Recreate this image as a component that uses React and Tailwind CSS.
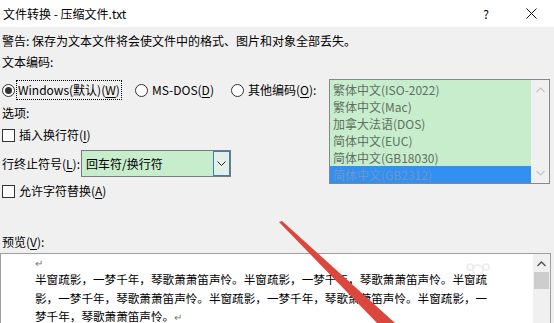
import React from "react";

const U = ({ children }) => <span className="underline underline-offset-2">{children}</span>;

function Radio({ checked }) {
  return (
    <span className="relative inline-flex h-[13px] w-[13px] shrink-0 items-center justify-center rounded-full border border-[#333] bg-white">
      {checked && <span className="h-[7px] w-[7px] rounded-full bg-[#333]" />}
    </span>
  );
}

function Check() {
  return <span className="inline-block h-[13px] w-[13px] shrink-0 border border-[#333] bg-white" />;
}

const listItems = [
  "繁体中文(ISO-2022)",
  "繁体中文(Mac)",
  "加拿大法语(DOS)",
  "简体中文(EUC)",
  "简体中文(GB18030)",
];

export default function App() {
  return (
    <div className="relative h-[323px] w-[554px] overflow-hidden bg-[#f0f0f0] font-['Noto_Sans_CJK_SC',sans-serif] text-[12px] text-black">
      {/* Title bar */}
      <div className="flex h-[27px] items-center bg-white pl-[3px]">
        <span className="text-[12px]">文件转换 - 压缩文件.txt</span>
        <span className="ml-auto mr-[37px] text-[12px]">?</span>
        <svg className="mr-[17px]" width="11" height="11" viewBox="0 0 11 11">
          <path d="M0.5 0.5 L10.5 10.5 M10.5 0.5 L0.5 10.5" stroke="#111" strokeWidth="1" />
        </svg>
      </div>

      <div className="mt-[5px] flex h-[18px] items-center pl-[2px]">警告: 保存为文本文件将会使文件中的格式、图片和对象全部丢失。</div>
      <div className="mt-[3px] flex h-[18px] items-center pl-[2px]">文本编码:</div>

      <div className="mt-[8px] flex">
        <div className="flex w-[329px] flex-col">
          <div className="flex h-[22px] items-center">
            <div className="ml-[2px] flex w-[133px] items-center">
              <Radio checked />
              <span className="ml-[1px] flex h-[20px] items-center border border-dotted border-black px-[1px]">
                Windows(默认)(<U>W</U>)
              </span>
            </div>
            <div className="flex w-[96px] items-center">
              <Radio />
              <span className="ml-[4px]">MS-DOS(<U>D</U>)</span>
            </div>
            <div className="flex items-center">
              <Radio />
              <span className="ml-[4px]">其他编码(<U>O</U>):</span>
            </div>
          </div>
          <div className="mt-[3px] flex h-[18px] items-center pl-[2px]">选项:</div>
          <div className="mt-[4px] flex h-[18px] items-center pl-[2px]">
            <Check />
            <span className="ml-[4px]">插入换行符(<U>I</U>)</span>
          </div>
          <div className="mt-[6px] flex h-[27px] items-center pl-[2px]">
            <span className="w-[79px]">行终止符号(<U>L</U>):</span>
            <div className="flex h-[27px] w-[150px] items-stretch border border-[#7a7a7a] bg-[#c7edcc]">
              <span className="flex flex-1 items-center pl-[4px]">回车符/换行符</span>
              <span className="flex w-[17px] items-center justify-center border border-[#3c7fb1] bg-[#e3efe9]">
                <svg width="9" height="6" viewBox="0 0 9 6">
                  <path d="M0.5 0.5 L4.5 4.5 L8.5 0.5" fill="none" stroke="#222" strokeWidth="1" />
                </svg>
              </span>
            </div>
          </div>
          <div className="mt-[5px] flex h-[18px] items-center pl-[2px]">
            <Check />
            <span className="ml-[4px]">允许字符替换(<U>A</U>)</span>
          </div>
        </div>

        <div className="flex h-[105px] w-[221px] border border-[#828790] bg-[#f0f0f0]">
          <div className="flex flex-1 flex-col bg-[#c7edcc] pt-[1px]">
            {listItems.map((t) => (
              <div key={t} className="flex h-[17px] items-center pl-[3px] text-[#5f7063]">
                {t}
              </div>
            ))}
            <div className="flex h-[17px] items-center bg-[#3390f3] pl-[3px] text-[#6f96c4]">简体中文(GB2312)</div>
          </div>
          <div className="flex w-[18px] flex-col items-center justify-between py-[7px]">
            <svg width="9" height="6" viewBox="0 0 9 6">
              <path d="M0.5 5 L4.5 1 L8.5 5" fill="none" stroke="#c4c4c4" strokeWidth="1.2" />
            </svg>
            <svg width="9" height="6" viewBox="0 0 9 6">
              <path d="M0.5 1 L4.5 5 L8.5 1" fill="none" stroke="#c4c4c4" strokeWidth="1.2" />
            </svg>
          </div>
        </div>
      </div>

      <div className="mt-[33px] flex h-[18px] items-center pl-[2px]">预览(<U>V</U>):</div>

      <div className="mt-[2px] flex h-[90px] w-[551px] border border-[#a0a0a0] bg-white">
        <div className="flex-1 pl-[34px]">
          <div className="flex h-[16px] items-center text-[10px] text-[#777]">↵</div>
          <div className="whitespace-nowrap text-[11.6px] leading-[18.5px]">
            半窗疏影，一梦千年，琴歌萧萧笛声怜。半窗疏影，一梦千年，琴歌萧萧笛声怜。半窗疏
          </div>
          <div className="whitespace-nowrap text-[11.6px] leading-[18.5px]">
            影，一梦千年，琴歌萧萧笛声怜。半窗疏影，一梦千年，琴歌萧萧笛声怜。半窗疏影，一
          </div>
          <div className="whitespace-nowrap text-[11.6px] leading-[18.5px]">
            梦千年，琴歌萧萧笛声怜。<span className="text-[10px] text-[#777]">↵</span>
          </div>
        </div>
        <div className="flex w-[17px] flex-col items-center bg-[#f0f0f0] pt-[7px]">
          <svg width="9" height="6" viewBox="0 0 9 6">
            <path d="M0.5 5 L4.5 1 L8.5 5" fill="none" stroke="#505050" strokeWidth="1.4" />
          </svg>
          <div className="mt-[5px] h-[17px] w-[15px] bg-[#cdcdcd]" />
        </div>
      </div>

      {/* faint watermark graphic */}
      <svg className="pointer-events-none absolute left-[428px] top-[262px] opacity-40" width="100" height="45" viewBox="0 0 100 45">
        <circle cx="50" cy="8" r="5" fill="none" stroke="#cfcfcf" strokeWidth="1.5" />
        <circle cx="58" cy="5" r="3" fill="none" stroke="#cfcfcf" strokeWidth="1.5" />
        <circle cx="42" cy="5" r="3" fill="none" stroke="#cfcfcf" strokeWidth="1.5" />
      </svg>

      {/* red annotation arrow */}
      <svg className="pointer-events-none absolute left-0 top-0" width="554" height="323" viewBox="0 0 554 323">
        <polygon points="279,222 282,221 395,323 377,323" fill="#dc473d" />
      </svg>
    </div>
  );
}
